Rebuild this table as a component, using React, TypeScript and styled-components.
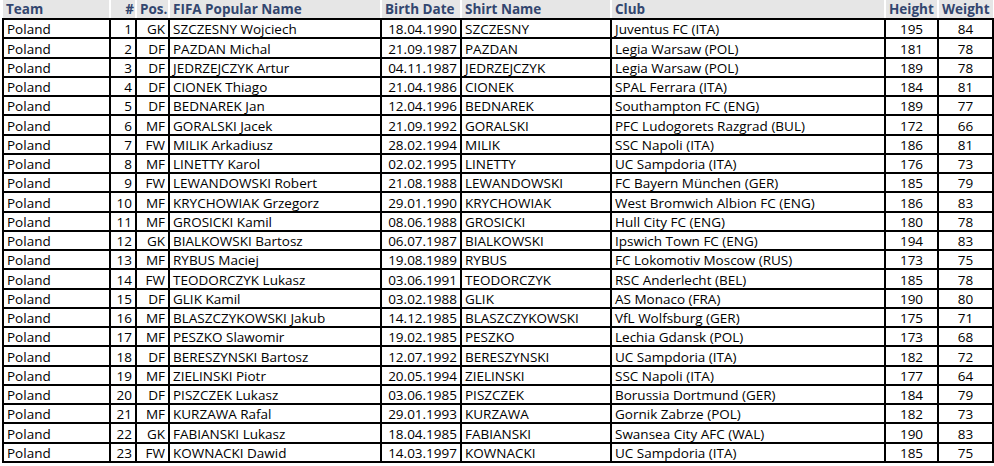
import React from "react";
import styled, { createGlobalStyle } from "styled-components";

const Global = createGlobalStyle`
  html, body { margin: 0; padding: 0; background: #fff; }
  body { font-family: "Open Sans", "Noto Sans", sans-serif; }
  *, *::before, *::after { box-sizing: border-box; }
`;

type Align = "left" | "right" | "center";

const Page = styled.div`
  padding: 0 2px;
  width: 994px;
`;

const Table = styled.table`
  border-collapse: collapse;
  table-layout: fixed;
  width: 990px;
  font-size: 13.5px;
  color: #000;
`;

const Col = styled.col<{ $w: number }>`
  width: ${(p) => p.$w}px;
`;

const HeadCell = styled.th<{ $align: Align }>`
  height: 19px;
  padding: 0 1px 0 3px;
  background: #e6e6e6;
  color: #33466f;
  font-weight: 700;
  text-align: ${(p) => p.$align};
  border-left: 2px solid #fff;
  white-space: nowrap;
  overflow: hidden;
  line-height: 18px;
  border-bottom: 2px solid #000;
  &:first-child { border-left: none; }
`;

const Row = styled.tr`
  height: 19.25px;
`;

const Cell = styled.td<{ $align: Align }>`
  border: 2px solid #000;
  padding: 0 3px 0 3px;
  text-align: ${(p) => p.$align};
  white-space: nowrap;
  overflow: hidden;
  line-height: 16px;
  vertical-align: bottom;
`;

const columns: { title: string; w: number; align: Align; head: Align }[] = [
  { title: "Team", w: 107, align: "left", head: "left" },
  { title: "#", w: 26, align: "right", head: "right" },
  { title: "Pos.", w: 33, align: "right", head: "left" },
  { title: "FIFA Popular Name", w: 212, align: "left", head: "left" },
  { title: "Birth Date", w: 80, align: "right", head: "left" },
  { title: "Shirt Name", w: 150, align: "left", head: "left" },
  { title: "Club", w: 274, align: "left", head: "left" },
  { title: "Height", w: 53, align: "center", head: "left" },
  { title: "Weight", w: 55, align: "center", head: "left" },
];

const players: [string, string, string, string, string, string, string][] = [
  ["GK", "SZCZESNY Wojciech", "18.04.1990", "SZCZESNY", "Juventus FC (ITA)", "195", "84"],
  ["DF", "PAZDAN Michal", "21.09.1987", "PAZDAN", "Legia Warsaw (POL)", "181", "78"],
  ["DF", "JEDRZEJCZYK Artur", "04.11.1987", "JEDRZEJCZYK", "Legia Warsaw (POL)", "189", "78"],
  ["DF", "CIONEK Thiago", "21.04.1986", "CIONEK", "SPAL Ferrara (ITA)", "184", "81"],
  ["DF", "BEDNAREK Jan", "12.04.1996", "BEDNAREK", "Southampton FC (ENG)", "189", "77"],
  ["MF", "GORALSKI Jacek", "21.09.1992", "GORALSKI", "PFC Ludogorets Razgrad (BUL)", "172", "66"],
  ["FW", "MILIK Arkadiusz", "28.02.1994", "MILIK", "SSC Napoli (ITA)", "186", "81"],
  ["MF", "LINETTY Karol", "02.02.1995", "LINETTY", "UC Sampdoria (ITA)", "176", "73"],
  ["FW", "LEWANDOWSKI Robert", "21.08.1988", "LEWANDOWSKI", "FC Bayern München (GER)", "185", "79"],
  ["MF", "KRYCHOWIAK Grzegorz", "29.01.1990", "KRYCHOWIAK", "West Bromwich Albion FC (ENG)", "186", "83"],
  ["MF", "GROSICKI Kamil", "08.06.1988", "GROSICKI", "Hull City FC (ENG)", "180", "78"],
  ["GK", "BIALKOWSKI Bartosz", "06.07.1987", "BIALKOWSKI", "Ipswich Town FC (ENG)", "194", "83"],
  ["MF", "RYBUS Maciej", "19.08.1989", "RYBUS", "FC Lokomotiv Moscow (RUS)", "173", "75"],
  ["FW", "TEODORCZYK Lukasz", "03.06.1991", "TEODORCZYK", "RSC Anderlecht (BEL)", "185", "78"],
  ["DF", "GLIK Kamil", "03.02.1988", "GLIK", "AS Monaco (FRA)", "190", "80"],
  ["MF", "BLASZCZYKOWSKI Jakub", "14.12.1985", "BLASZCZYKOWSKI", "VfL Wolfsburg (GER)", "175", "71"],
  ["MF", "PESZKO Slawomir", "19.02.1985", "PESZKO", "Lechia Gdansk (POL)", "173", "68"],
  ["DF", "BERESZYNSKI Bartosz", "12.07.1992", "BERESZYNSKI", "UC Sampdoria (ITA)", "182", "72"],
  ["MF", "ZIELINSKI Piotr", "20.05.1994", "ZIELINSKI", "SSC Napoli (ITA)", "177", "64"],
  ["DF", "PISZCZEK Lukasz", "03.06.1985", "PISZCZEK", "Borussia Dortmund (GER)", "184", "79"],
  ["MF", "KURZAWA Rafal", "29.01.1993", "KURZAWA", "Gornik Zabrze (POL)", "182", "73"],
  ["GK", "FABIANSKI Lukasz", "18.04.1985", "FABIANSKI", "Swansea City AFC (WAL)", "190", "83"],
  ["FW", "KOWNACKI Dawid", "14.03.1997", "KOWNACKI", "UC Sampdoria (ITA)", "185", "75"],
];

export default function App() {
  return (
    <>
      <Global />
      <Page>
        <Table>
          <colgroup>
            {columns.map((c) => (
              <Col key={c.title} $w={c.w} />
            ))}
          </colgroup>
          <thead>
            <tr>
              {columns.map((c) => (
                <HeadCell key={c.title} $align={c.head}>
                  {c.title}
                </HeadCell>
              ))}
            </tr>
          </thead>
          <tbody>
            {players.map((p, i) => {
              const values = ["Poland", String(i + 1), ...p];
              return (
                <Row key={i}>
                  {values.map((v, j) => (
                    <Cell key={j} $align={columns[j].align}>
                      {v}
                    </Cell>
                  ))}
                </Row>
              );
            })}
          </tbody>
        </Table>
      </Page>
    </>
  );
}
